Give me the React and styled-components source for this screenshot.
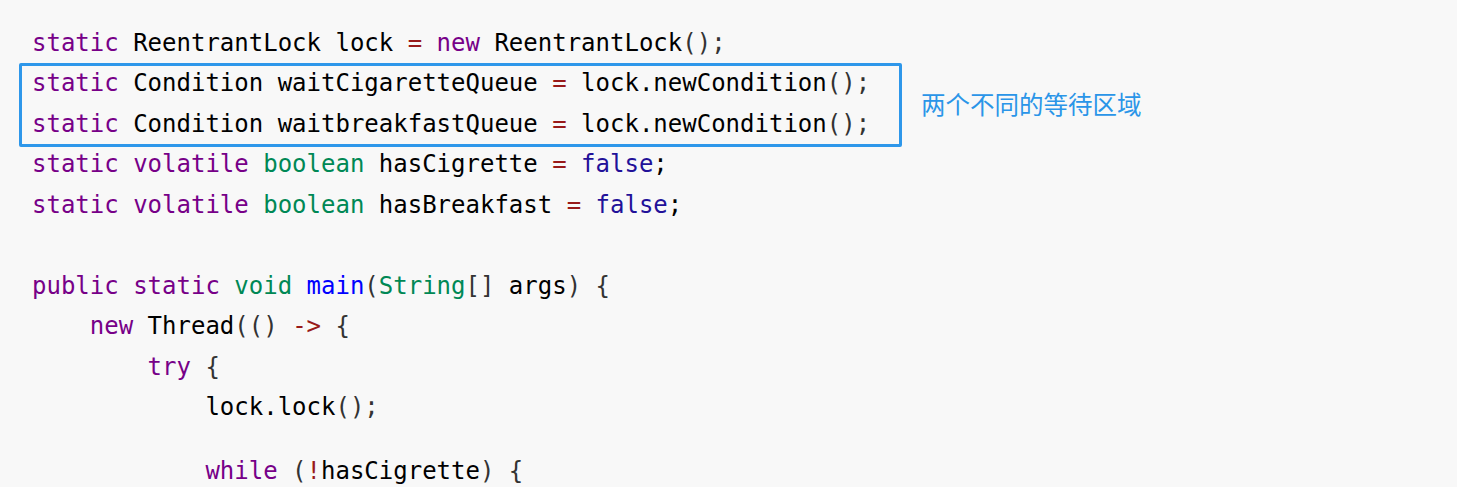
import React from "react";
import styled, { createGlobalStyle } from "styled-components";

const Global = createGlobalStyle`
  html, body { margin: 0; padding: 0; background: #f8f8f8; }
  body { width: 1457px; height: 487px; overflow: hidden; }
`;

const CodeBlock = styled.pre`
  margin: 0;
  padding: 22.6px 0 0 32px;
  background: #f8f8f8;
  height: 487px;
  box-sizing: border-box;
  font-family: "DejaVu Sans Mono", "Liberation Mono", monospace;
  font-size: 24px;
  line-height: 40.5px;
  color: #000;
  white-space: pre;
`;

const Line = styled.div`
  height: ${(p) => (p.$short ? "23px" : "40.5px")};
`;

const Group = styled.div`
  position: relative;
`;

const Highlight = styled.div`
  position: absolute;
  top: 0;
  bottom: -3px;
  left: -13px;
  width: 883px;
  box-sizing: border-box;
  border: 3px solid #2e97ea;
  border-radius: 2px;
  pointer-events: none;
`;

const Note = styled.span`
  position: absolute;
  left: 889px;
  top: 26px;
  font-family: "Noto Sans CJK SC", "Noto Sans", sans-serif;
  font-size: 24.5px;
  line-height: 30px;
  color: #2a95e8;
  white-space: nowrap;
`;

const colors = {
  k: "#770088",
  t: "#008855",
  o: "#981a1a",
  a: "#221199",
  d: "#0000ff",
  p: "#333333",
};

const Tok = styled.span`
  color: ${(p) => colors[p.$c] || "#000"};
`;

const K = ({ children }) => <Tok $c="k">{children}</Tok>;
const T = ({ children }) => <Tok $c="t">{children}</Tok>;
const O = ({ children }) => <Tok $c="o">{children}</Tok>;
const A = ({ children }) => <Tok $c="a">{children}</Tok>;
const D = ({ children }) => <Tok $c="d">{children}</Tok>;
const P = ({ children }) => <Tok $c="p">{children}</Tok>;

export default function App() {
  return (
    <>
      <Global />
      <CodeBlock>
        <Line>
          <K>static</K> ReentrantLock lock <O>=</O> <K>new</K> ReentrantLock<P>();</P>
        </Line>
        <Group>
          <Line>
            <K>static</K> Condition waitCigaretteQueue <O>=</O> lock.newCondition<P>();</P>
          </Line>
          <Line>
            <K>static</K> Condition waitbreakfastQueue <O>=</O> lock.newCondition<P>();</P>
          </Line>
          <Highlight />
          <Note>两个不同的等待区域</Note>
        </Group>
        <Line>
          <K>static</K> <K>volatile</K> <T>boolean</T> hasCigrette <O>=</O> <A>false</A>;
        </Line>
        <Line>
          <K>static</K> <K>volatile</K> <T>boolean</T> hasBreakfast <O>=</O> <A>false</A>;
        </Line>
        <Line> </Line>
        <Line>
          <K>public</K> <K>static</K> <T>void</T> <D>main</D><P>(</P><T>String</T><P>[]</P> args<P>)</P> <P>{"{"}</P>
        </Line>
        <Line>
          {"    "}<K>new</K> Thread<P>(()</P> <O>{"->"}</O> <P>{"{"}</P>
        </Line>
        <Line>
          {"        "}<K>try</K> <P>{"{"}</P>
        </Line>
        <Line>
          {"            "}lock.lock<P>();</P>
        </Line>
        <Line $short> </Line>
        <Line>
          {"            "}<K>while</K> <P>(</P><O>!</O>hasCigrette<P>)</P> <P>{"{"}</P>
        </Line>
      </CodeBlock>
    </>
  );
}
